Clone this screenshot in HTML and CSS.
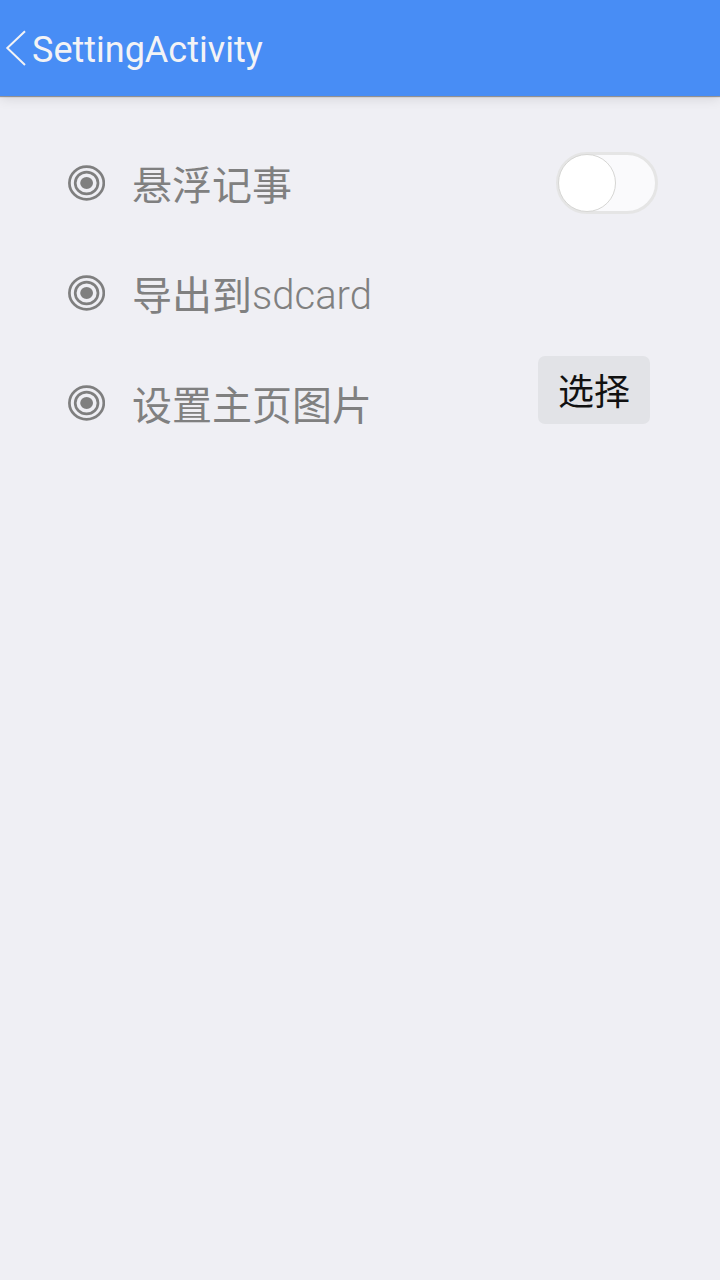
FILE: index.html
```html
<!DOCTYPE html>
<html lang="zh-CN">
<head>
<meta charset="utf-8">
<title>SettingActivity</title>
<link rel="stylesheet" href="styles.css">
</head>
<body>
<svg class="symbols" width="0" height="0">
<symbol id="target" viewBox="0 0 38 38">
<g fill="none" stroke="#7f7f7f"><ellipse cx="19.6" cy="19" rx="17.2" ry="16.3" stroke-width="2.7"/><ellipse cx="19.6" cy="19" rx="11.4" ry="10.9" stroke-width="2.7"/></g>
<ellipse cx="19.6" cy="19" rx="6.4" ry="6.1" fill="#7f7f7f"/>
</symbol>
</svg>
<header class="bar">
<svg class="back" width="32" height="48" viewBox="0 0 32 48"><path d="M25 7.2 7.3 24l17.7 17" fill="none" stroke="#f3f3f5" stroke-width="2"/></svg>
<h1 class="title">SettingActivity</h1>
</header>
<main class="list">
<div class="row"><svg class="icon"><use href="#target"/></svg><span class="label">悬浮记事</span><span class="switch"><span class="knob"></span></span></div>
<div class="row"><svg class="icon"><use href="#target"/></svg><span class="label">导出到<span class="latin">sdcard</span></span></div>
<div class="row"><svg class="icon"><use href="#target"/></svg><span class="label">设置主页图片</span><button class="choose">选择</button></div>
</main>
</body>
</html>
```
FILE: styles.css
```css
* { box-sizing: border-box; }
body { margin: 0; min-height: 1280px; background: #efeff4; font-family: Roboto, "Noto Sans CJK SC", sans-serif; }
.symbols { display: block; }
.bar { height: 96px; display: flex; align-items: center; background: #488df5; box-shadow: 0 1px 1px rgba(0,0,0,.35), 0 2px 12px rgba(0,0,0,.12); }
.back { flex: none; }
.title { margin: 3px 0 0; font-size: 36px; font-weight: 400; line-height: 44px; color: #f3f3f5; }
.list { padding: 32px 62px 0 67px; }
.row { height: 110px; display: flex; align-items: center; }
.icon { width: 38px; height: 38px; flex: none; }
.label { margin: 7px 0 0 27px; font-size: 40px; font-weight: 400; line-height: 56px; color: #808080; white-space: nowrap; }
.latin { font-weight: 300; vertical-align: 1px; }
.switch { width: 102px; height: 62px; margin-left: auto; border: 3px solid #e5e5e5; border-radius: 31px; background: #fafafc; }
.knob { display: block; width: 58px; height: 58px; margin: -1px; border: 1px solid #d6d6d4; border-radius: 50%; background: #fff; }
.choose { width: 112px; height: 68px; margin: 0 8px 26px auto; padding: 7px 0 0; border: 0; border-radius: 7px; background: #e2e3e7; color: #111; font: 400 36px/61px Roboto, "Noto Sans CJK SC", sans-serif; }
```
